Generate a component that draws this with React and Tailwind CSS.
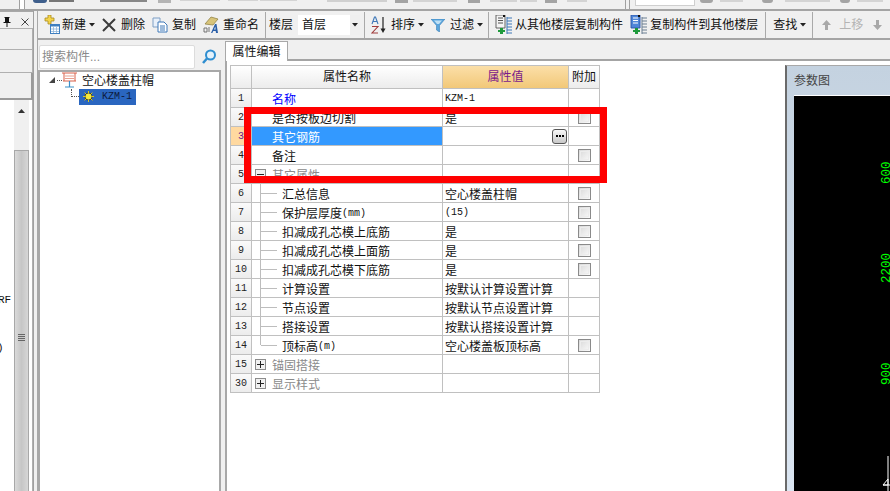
import React from "react";

const rows = [
	{ no: "1", name: "名称", value: "KZM-1", nameClass: "text-[#0000ff]" },
	{ no: "2", name: "是否按板边切割", value: "是", check: true },
	{ no: "3", name: "其它钢筋", selected: true },
	{ no: "4", name: "备注", check: true },
	{ no: "5", name: "其它属性", group: "minus" },
	{ no: "6", name: "汇总信息", value: "空心楼盖柱帽", child: true, check: true },
	{ no: "7", name: "保护层厚度", unit: "(mm)", value: "(15)", child: true, check: true },
	{ no: "8", name: "扣减成孔芯模上底筋", value: "是", child: true, check: true },
	{ no: "9", name: "扣减成孔芯模上面筋", value: "是", child: true, check: true },
	{ no: "10", name: "扣减成孔芯模下底筋", value: "是", child: true, check: true },
	{ no: "11", name: "计算设置", value: "按默认计算设置计算", child: true },
	{ no: "12", name: "节点设置", value: "按默认节点设置计算", child: true },
	{ no: "13", name: "搭接设置", value: "按默认搭接设置计算", child: true },
	{ no: "14", name: "顶标高", unit: "(m)", value: "空心楼盖板顶标高", child: true, check: true, last: true },
	{ no: "15", name: "锚固搭接", group: "plus" },
	{ no: "30", name: "显示样式", group: "plus" },
];

function Caret() {
	return (
		<svg width="6" height="4" viewBox="0 0 6 4" className="shrink-0 ml-[3px]">
			<path d="M0 0h6L3 3.5z" fill="#222" />
		</svg>
	);
}

function Sep({ className }) {
	return <div className={`w-px h-[26px] bg-[#a9a9a9] shrink-0 ${className}`}></div>;
}

function NewIcon() {
	return (
		<svg width="18" height="20" viewBox="0 0 18 20" className="shrink-0 ml-[4px]">
			<path d="M3 3h3V0h3v3h3v3H9v3H6V6H3z" fill="#f4d44a" stroke="#a98a1c" strokeWidth="0.8" />
			<rect x="8.5" y="9.5" width="9" height="9" fill="#fff" stroke="#3f7fc0" />
			<path d="M8.5 11.5h9v-2h-9z" fill="#3f7fc0" />
			<path d="M9 14h8M9 16.5h8M11.5 12v6M14.5 12v6" stroke="#8fb6dc" strokeWidth="0.8" />
		</svg>
	);
}

function DeleteIcon() {
	return (
		<svg width="14" height="14" viewBox="0 0 14 14" className="shrink-0 ml-[7px]">
			<path d="M1 1l12 12M13 1L1 13" stroke="#3c3c3c" strokeWidth="2" />
		</svg>
	);
}

function CopyIcon() {
	return (
		<svg width="16" height="16" viewBox="0 0 16 16" className="shrink-0 ml-[7px]">
			<path d="M1 1h7v9H1z" fill="#e8f0fa" stroke="#7f9fc4" />
			<path d="M6 5h6l3 3v7H6z" fill="#fff" stroke="#3f78b8" />
			<path d="M8 9h5M8 11h5M8 13h5" stroke="#3f78b8" />
		</svg>
	);
}

function RenameIcon() {
	return (
		<svg width="16" height="18" viewBox="0 0 16 18" className="shrink-0 ml-[7px]">
			<path d="M2 8l6-7 7 2-5 6z" fill="#d8c47a" stroke="#8a7a3a" strokeWidth="0.7" />
			<path d="M1 16V12h3v4zM6 11v5" stroke="#666" strokeWidth="0.9" fill="none" />
			<path d="M8 17l4-9h1.5l1.5 9h-2l-.3-2h-2.4l-1 2zM11 13.5h1.6l-.3-3z" fill="#2a5fa8" fillRule="evenodd" />
		</svg>
	);
}

function SortIcon() {
	return (
		<svg width="16" height="18" viewBox="0 0 16 18" className="shrink-0 ml-[6px]">
			<path d="M1 8l2.5-7h1L7 8M2 5.5h4" stroke="#3f78b8" strokeWidth="1.1" fill="none" />
			<path d="M1 10.5h6L1 17h6" stroke="#a03c3c" strokeWidth="1.1" fill="none" />
			<path d="M12 1v14" stroke="#222" strokeWidth="1.2" />
			<path d="M9.5 12.5L12 17l2.5-4.5z" fill="#222" />
		</svg>
	);
}

function FunnelIcon() {
	return (
		<svg width="14" height="13" viewBox="0 0 14 13" className="shrink-0 ml-[7px]">
			<path d="M0 0h14L8.5 6.5V13L5.5 11V6.5z" fill="#5aa5dc" stroke="#3a80b8" strokeWidth="0.6" />
			<path d="M3 1.5h8L8 5H6z" fill="#bfe0f5" />
		</svg>
	);
}

function FloorCopyIcon({ className, blue }) {
	return (
		<svg width="18" height="20" viewBox="0 0 18 20" className={`shrink-0 ${className}`}>
			<path d="M1 0h9v13H1z" fill={blue ? "#4f86d8" : "#f4f4f4"} stroke={blue ? "#2a55a8" : "#555"} strokeWidth="0.9" />
			<path d="M3 3h5M3 5.5h5M3 8h5" stroke={blue ? "#fff" : "#555"} />
			<path d="M8 0h2v2H8z" fill="#111" />
			<path d="M5 13h3v2h2v2H8v2H5v-2H3v-2h2z" fill="#1f9a3c" />
			<path d="M12 3h5M12 6h5M12 9h5M12 12h5M12 15h5M12 18h5" stroke={blue ? "#6b7f92" : "#3f78b8"} strokeWidth="1.2" />
			<path d="M12 2v17" stroke={blue ? "#6b7f92" : "#3f78b8"} />
		</svg>
	);
}

function MoveIcon({ down, className }) {
	return (
		<svg width="9" height="10" viewBox="0 0 9 10" className={`shrink-0 ${className}`}>
			<path d={down ? "M3 0h3v5h3L4.500 10 0 5h3z" : "M4.500 0L9 5H6v5H3V5H0z"} fill="#a8a8a8" />
		</svg>
	);
}

function Checkbox() {
	return (
		<div className="w-[13px] h-[13px] border border-[#8a8a8a] bg-gradient-to-br from-[#d8d8d8] to-[#fbfbfb] p-px">
			<div className="w-full h-full border border-[#ececec]"></div>
		</div>
	);
}

function Expander({ plus }) {
	return (
		<div className="ml-[3px] w-[11px] h-[11px] border border-[#8c8c8c] bg-[#f0f0f0] flex items-center justify-center relative shrink-0">
			<div className="w-[7px] h-px bg-[#222]"></div>
			{plus && <div className="absolute w-px h-[7px] bg-[#222]"></div>}
		</div>
	);
}

function TableRow({ row }) {
	const mono = row.value === "KZM-1" || row.value === "(15)";
	return (
		<>
			<div
				className={`border-r border-b border-[#c0c0c0] flex items-center justify-center pt-[2px] text-[10px] font-['Liberation_Mono',monospace] ${
					row.selected ? "bg-[#ffd9a0] text-[#6a1a8a]" : "bg-gradient-to-b from-[#fafafa] to-[#ececec] text-[#222]"
				}`}
			>
				{row.no}
			</div>
			<div
				className={`border-r border-b border-[#c0c0c0] flex items-center ${
					row.selected ? "bg-[#3399ff] text-white" : row.group ? "text-[#8a8a8a]" : (row.nameClass || "text-[#111]")
				}`}
			>
				{row.group && <Expander plus={row.group === "plus"} />}
				{row.child ? (
					<>
						<div className={`ml-[8px] w-px bg-[#bdbdbd] self-stretch ${row.last ? "mb-[9px]" : ""}`}></div>
						<div className="w-[16px] h-px bg-[#bdbdbd]"></div>
						<span className="ml-[5px] mt-[4px]">{row.name}</span>
						{row.unit && <span className="mt-[3px] text-[10px] font-['Liberation_Mono',monospace]">{row.unit}</span>}
					</>
				) : (
					<span className={`mt-[4px] ${row.group ? "ml-[6px]" : "ml-[20px]"}`}>{row.name}</span>
				)}
			</div>
			<div className="border-r border-b border-[#c0c0c0] flex items-center justify-between pl-[2px] pr-px text-[#111]">
				<span className={mono ? "mt-[2px] font-['Liberation_Mono',monospace] text-[10px]" : "mt-[4px]"}>
					{row.value}
				</span>
				{row.selected && (
					<div className="w-[15px] h-[15px] rounded-[3px] border border-[#555] bg-gradient-to-b from-[#f8f8f8] to-[#c9c9c9] flex items-center justify-center gap-px">
						<i className="w-[2px] h-[2px] bg-black"></i>
						<i className="w-[2px] h-[2px] bg-black"></i>
						<i className="w-[2px] h-[2px] bg-black"></i>
					</div>
				)}
			</div>
			<div className="border-r border-b border-[#c0c0c0] flex items-center justify-center">
				{row.check && <Checkbox />}
			</div>
		</>
	);
}

export default function App() {
	return (
		<div className="relative w-[890px] h-[491px] overflow-hidden bg-[#f0f0f0] flex flex-col text-[12px] leading-none font-['Liberation_Sans','Noto_Sans_CJK_SC',sans-serif]">
			{/* cut off row above the toolbar */}
			<div className="h-[11px] shrink-0 border-b-2 border-[#a4a4a4] flex items-start">
				<div className="ml-[19px] w-[6px] h-[9px] bg-white border-x border-[#a0a0a0]"></div>
				<div className="ml-[8px] w-[14px] h-[3px] bg-[#3f5f8c] rounded-b"></div>
				<div className="ml-[2px] w-[25px] h-[2px] bg-[#777]"></div>
				<div className="ml-[26px] w-[47px] h-[2px] bg-[#888]"></div>
				<div className="ml-[11px] w-[13px] h-[3px] bg-[#b4b4b4]"></div>
				<div className="ml-[9px] w-[40px] h-[1px] bg-[#d4d4d4]"></div>
				<div className="ml-[8px] w-[30px] h-[1px] bg-[#d4d4d4]"></div>
				<div className="ml-[2px] w-[37px] h-[1px] bg-[#d4d4d4]"></div>
				<div className="ml-[30px] w-[60px] h-[2px] bg-[#d0d0d0]"></div>
				<div className="ml-[8px] w-[13px] h-[3px] bg-[#a4a4a4]"></div>
				<div className="ml-[5px] w-[44px] h-[2px] bg-[#d4d4d4]"></div>
				<div className="ml-[11px] w-[12px] h-[3px] bg-[#a4a4a4]"></div>
				<div className="ml-[10px] w-[27px] h-[2px] bg-[#d4d4d4]"></div>
				<div className="ml-[3px] w-[17px] h-[2px] bg-[#d4d4d4]"></div>
				<div className="ml-[8px] w-[12px] h-[3px] bg-[#a4a4a4]"></div>
				<div className="ml-[10px] w-[20px] h-[2px] bg-[#d4d4d4]"></div>
				<div className="ml-[38px] w-[5px] h-[9px] border-x border-[#a0a0a0]"></div>
				<div className="ml-[5px] w-[60px] h-[6px] bg-white border-x border-b border-[#cfcfcf]"></div>
				<div className="ml-[5px] w-[13px] h-[3px] bg-[#a4a4a4] rounded-b"></div>
				<div className="ml-[7px] w-[23px] h-[2px] bg-[#d4d4d4]"></div>
				<div className="ml-[19px] w-[11px] h-[3px] bg-[#a4a4a4] rounded-b"></div>
				<div className="ml-[12px] w-[45px] h-[2px] bg-[#d4d4d4]"></div>
				<div className="ml-[10px] w-[10px] h-[3px] bg-[#a4a4a4] rounded-b"></div>
				<div className="ml-[7px] w-[26px] h-[2px] bg-[#d4d4d4]"></div>
			</div>

			<div className="flex flex-1 min-h-0">
				{/* left dock */}
				<div className="w-[34px] shrink-0 flex flex-col border-r border-[#a0a0a0]">
					<div className="h-[17px] shrink-0 border-t border-[#a8a8a8] flex items-center text-[#111]">
						<svg width="8" height="10" viewBox="0 0 8 10" className="ml-[3px] mt-[3px]">
							<path d="M1.500 0h5v1H6v4h1.500v1h-3v4h-1V6h-3V5H2V1h-.5z" fill="#111" />
						</svg>
						<svg width="8" height="8" viewBox="0 0 8 8" className="ml-[10px] mt-[4px]">
							<path d="M.5.5l7 7M7.500.5l-7 7" stroke="#444" />
						</svg>
					</div>
					<div className="h-[22px] shrink-0 border border-[#b0b0b0] border-l-0"></div>
					<div className="h-[23px] shrink-0 border-b border-r border-[#b0b0b0]"></div>
					<div className="h-[27px] shrink-0 border-b-2 border-r-2 border-[#9a9a9a]"></div>
					<div className="flex flex-1 min-h-0 bg-white border-r border-[#b0b0b0]">
						<div className="w-[14px] shrink-0 overflow-hidden text-[11px] font-['Liberation_Mono',monospace] text-[#111] whitespace-nowrap">
							<div className="mt-[195px] -ml-[2px] h-[12px]">RF</div>
							<div className="mt-[36px] -ml-[3px] h-[12px]">)</div>
						</div>
						<div className="w-[15px] shrink-0 flex flex-col">
							<div className="h-[50px] bg-[#f0f0f0] flex justify-center pt-[9px]">
								<svg width="7" height="4" viewBox="0 0 7 4"><path d="M3.500 0L7 4H0z" fill="#333" /></svg>
							</div>
							<div className="flex-1 bg-gradient-to-r from-[#dadada] via-[#c6c6c6] to-[#d6d6d6] border-x border-t border-[#a8a8a8] flex flex-col items-center pt-[183px] gap-px">
								<i className="w-[7px] h-px bg-[#666]"></i>
								<i className="w-[7px] h-px bg-[#666]"></i>
								<i className="w-[7px] h-px bg-[#666]"></i>
								<i className="w-[7px] h-px bg-[#666]"></i>
							</div>
						</div>
					</div>
				</div>

				<div className="w-[3px] shrink-0"></div>

				{/* toolbar and content */}
				<div className="flex-1 min-w-0 flex flex-col border-l border-[#a8a8a8]">
					<div className="h-[29px] shrink-0 flex items-center pt-px border-b-2 border-[#a4a4a4] whitespace-nowrap text-[#111]">
						<NewIcon />
						<span className="ml-[2px]">新建</span>
						<Caret />
						<DeleteIcon />
						<span className="ml-[5px]">删除</span>
						<CopyIcon />
						<span className="ml-[4px]">复制</span>
						<RenameIcon />
						<span className="ml-[4px]">重命名</span>
						<Sep className="ml-[6px]" />
						<span className="ml-[3px]">楼层</span>
						<div className="ml-[5px] w-[62px] h-[20px] bg-white flex items-center justify-between pl-[4px]">
							首层
							<div className="w-[10px] h-full bg-[#efefef] flex items-center justify-center">
								<svg width="6" height="4" viewBox="0 0 6 4"><path d="M0 0h6L3 3.500z" fill="#222" /></svg>
							</div>
						</div>
						<Sep className="ml-[4px]" />
						<SortIcon />
						<span className="ml-[4px]">排序</span>
						<Caret />
						<FunnelIcon />
						<span className="ml-[5px]">过滤</span>
						<Caret />
						<Sep className="ml-[5px]" />
						<FloorCopyIcon className="ml-[6px]" />
						<span className="ml-[2px]">从其他楼层复制构件</span>
						<FloorCopyIcon className="ml-[7px]" blue />
						<span className="ml-[2px]">复制构件到其他楼层</span>
						<Sep className="ml-[7px]" />
						<span className="ml-[7px]">查找</span>
						<Caret />
						<Sep className="ml-[6px]" />
						<MoveIcon className="ml-[9px]" />
						<span className="ml-[8px] text-[#b4b4b4]">上移</span>
						<MoveIcon down className="ml-[10px]" />
					</div>

					<div className="flex flex-1 min-h-0">
						{/* component tree */}
						<div className="w-[183px] shrink-0 flex flex-col">
							<div className="h-[30px] shrink-0 flex items-center pl-px pt-[3px]">
								<div className="w-[156px] h-[24px] bg-white border border-[#dcdcdc] flex items-center pl-[2px] text-[#8a8a8a] rounded-[2px]">
									搜索构件...
								</div>
								<svg width="16" height="16" viewBox="0 0 16 16" className="ml-[6px]">
									<circle cx="9.500" cy="6" r="4.500" fill="#e4f2fb" stroke="#2f8ed0" strokeWidth="2" />
									<path d="M6 9.500L2 14" stroke="#2f8ed0" strokeWidth="2.500" />
								</svg>
							</div>
							<div className="flex-1 bg-white border-l-2 border-t-2 border-r-2 border-[#a8a8a8] pl-[9px]">
								<div className="h-[16px] flex items-center">
									<svg width="6" height="6" viewBox="0 0 6 6" className="shrink-0"><path d="M6 0v6H0z" fill="#444" /></svg>
									<div className="ml-[2px] w-[5px] border-t border-dotted border-[#555]"></div>
									<svg width="15" height="16" viewBox="0 0 15 16" className="shrink-0">
										<path d="M0 1h15" stroke="#d8604a" />
										<path d="M2 1v8M13 1v8M1 9h13" stroke="#d8604a" fill="none" />
										<path d="M3 4h9M3 6.500h9" stroke="#e8a090" />
										<path d="M7.500 9v6M3 15h9" stroke="#3b8fc8" strokeWidth="1.200" />
									</svg>
									<span className="ml-[5px] mt-[2px] text-[#111]">空心楼盖柱帽</span>
								</div>
								<div className="h-[17px] flex items-center">
									<div className="ml-[22px] w-[8px] h-[8px] border-l border-b border-dotted border-[#555] -mt-[8px]"></div>
									<div className="w-[57px] h-[16px] bg-[#2a66c0] flex items-center pl-[4px] font-['Liberation_Mono',monospace] text-[10px] text-[#0c1a3c]">
										<svg width="11" height="11" viewBox="0 0 11 11" className="shrink-0 mr-[8px]">
											<circle cx="5.500" cy="5.500" r="3.600" fill="#f6e93c" stroke="#222" strokeWidth="0.800" />
											<path d="M5.500 0v2M5.500 9v2M0 5.500h2M9 5.500h2M1.600 1.600l1.400 1.400M8 8l1.400 1.400M9.400 1.600L8 3M3 8l-1.400 1.400" stroke="#d8c820" />
										</svg>
										KZM-1
									</div>
								</div>
							</div>
						</div>

						<div className="w-[4px] shrink-0"></div>

						{/* property editor */}
						<div className="flex-1 min-w-0 flex flex-col">
							<div className="h-[21px] shrink-0 flex items-end">
								<div className="w-[63px] h-[20px] bg-white border border-b-0 border-[#a8a8a8] flex items-center justify-center text-[#111]">
									属性编辑
								</div>
								<div className="flex-1 border-b-2 border-[#a4a4a4]"></div>
							</div>
							<div className="flex-1 min-h-0 bg-white border-l-2 border-[#a8a8a8] flex pt-[4px] pl-[3px]">
								<div className="w-[370px] shrink-0">
									<div className="grid grid-cols-[21px_191px_126px_31px] grid-rows-[23px] auto-rows-[19px] border-l border-t border-[#c0c0c0]">
										<div className="border-r border-b border-[#c0c0c0] bg-gradient-to-b from-white to-[#ececec]"></div>
										<div className="border-r border-b border-[#c0c0c0] bg-gradient-to-b from-white to-[#ececec] flex items-center justify-center text-[#111]">属性名称</div>
										<div className="border-r border-b border-[#c0c0c0] bg-gradient-to-b from-[#fbdfa8] to-[#f2c878] flex items-center justify-center text-[#7a1a8a]">属性值</div>
										<div className="border-r border-b border-[#c0c0c0] bg-gradient-to-b from-white to-[#ececec] flex items-center justify-center text-[#111]">附加</div>
										{rows.map((row) => (
											<TableRow key={row.no} row={row} />
										))}
									</div>
								</div>
								<div className="ml-[185px] flex-1 flex flex-col bg-gradient-to-b from-[#c4d2e0] to-[#dbe6f2] border-l-2 border-[#6a6a6a] border-t border-t-[#a8a8a8]">
									<div className="h-[29px] shrink-0 flex items-center pl-[7px] text-[#444]">参数图</div>
									<div className="flex-1 ml-[7px] bg-black border-t border-white">
										<svg width="96" height="396" viewBox="0 0 96 396" className="block">
											<g fill="#00ff00" fontFamily="'Liberation Mono', monospace" fontSize="12.500">
												<text transform="translate(96 88) rotate(-90)">600</text>
												<text transform="translate(96 187) rotate(-90)">2200</text>
												<text transform="translate(96 289) rotate(-90)">900</text>
											</g>
											<path d="M94 360v36M89 389l5-6v6zM89 389h7" stroke="#fff" fill="none" />
										</svg>
									</div>
								</div>
							</div>
						</div>
					</div>
				</div>
			</div>

			{/* red annotation drawn over the table */}
			<div className="absolute left-[244px] top-[107px] w-[363px] h-[76px] border-[7px] border-[#ff0000]"></div>
		</div>
	);
}
